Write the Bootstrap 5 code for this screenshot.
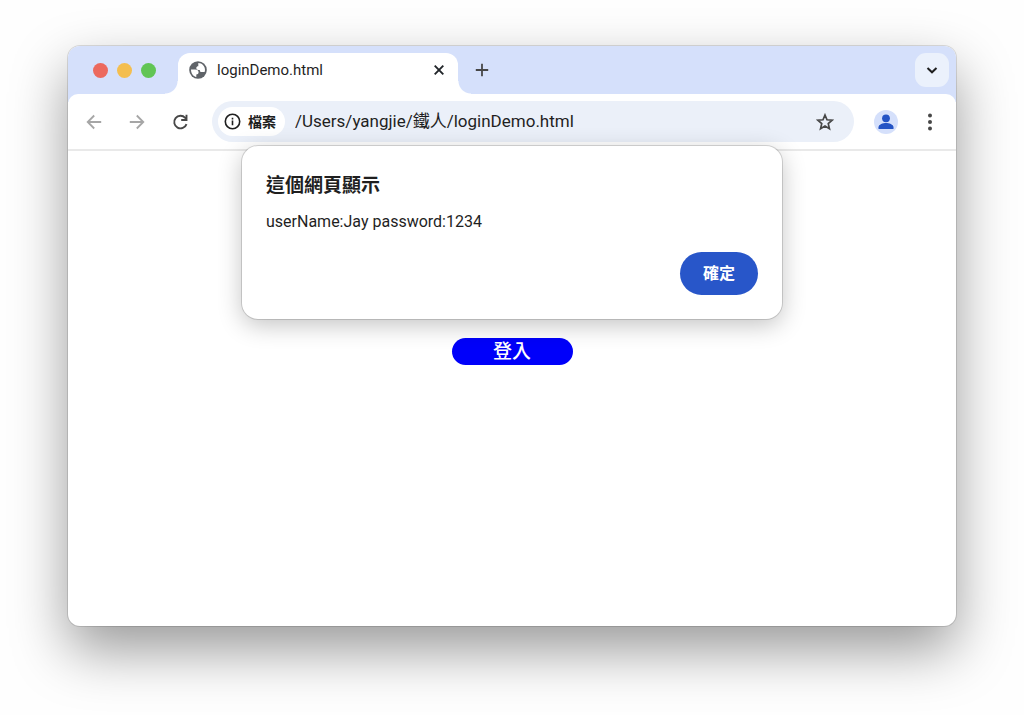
<!DOCTYPE html>
<html lang="zh-Hant">
<head>
<meta charset="utf-8">
<meta name="viewport" content="width=device-width, initial-scale=1">
<title>loginDemo.html</title>
<link href="https://cdn.jsdelivr.net/npm/bootstrap@5.3.0/dist/css/bootstrap.min.css" rel="stylesheet">
<style>
  body { font-family: Roboto, "Noto Sans CJK TC", sans-serif; color: #1f1f1f; background: #fefefe; padding: 46px 68px 89px; }
  svg { display: block; }
  .browser { border-radius: 12px; background: #fff; box-shadow: 0 0 0 1px rgba(0,0,0,.12), 0 24px 56px rgba(0,0,0,.4); }
  .tab-strip { height: 56px; margin-bottom: -8px; padding: 7px 7px 8px 25px; background: #d5e0fb; border-radius: 12px 12px 0 0; }
  .lights { gap: 9px; height: 34px; }
  .light { width: 15px; height: 15px; border-radius: 50%; }
  .light-red { background: #ec695e; }
  .light-yellow { background: #f4be4f; }
  .light-green { background: #61c554; }
  .tab { width: 280px; height: 41px; margin-left: 22px; padding: 0 12px 7px 11px; gap: 10px; background: #fff; border-radius: 12px 12px 0 0; font-size: 15px; line-height: 20px; }
  .tab::before, .tab::after { content: ""; position: absolute; bottom: 0; width: 13px; height: 13px; }
  .tab::before { right: 100%; background: radial-gradient(circle at 0 0, transparent 12px, #fff 13px); }
  .tab::after { left: 100%; background: radial-gradient(circle at 100% 0, transparent 12px, #fff 13px); }
  .icon-btn { padding: 0; border: 0; background: none; color: #474747; flex: none; }
  .new-tab { height: 34px; margin-left: 17px; }
  .tab-search { width: 34px; height: 34px; border-radius: 11px; background: #ebf1fc; color: #1f1f1f; }
  .toolbar { height: 57px; padding: 0 16px 0 17px; background: #fff; border-radius: 10px 10px 0 0; border-bottom: 2px solid #e9e9e9; }
  .nav-icons { gap: 25px; margin-right: 23px; }
  .faded { color: #a6a6a6; }
  .omnibox { height: 41px; border-radius: 21px; background: #ebf0f9; padding: 0 20px 0 6px; }
  .site-chip { height: 29px; padding: 0 9px 0 6px; gap: 7px; border: 0; border-radius: 15px; background: #fff; color: #1f1f1f; font-size: 14px; line-height: 20px; font-weight: 700; }
  .address { border: 0; background: none; padding: 0; margin-left: 10px; font-size: 17px; color: #1f1f1f; outline: 0; }
  .avatar { width: 24px; height: 24px; margin-left: 20px; border-radius: 50%; background: #d5e0fb; color: #2454c5; overflow: hidden; }
  .menu-btn { margin-left: 22px; }
  .alert-box { top: -5px; left: 50%; transform: translateX(-50%); width: 540px; max-width: 100%; padding: 26px 24px 24px; background: #fff; border-radius: 16px; box-shadow: 0 0 0 1px rgba(0,0,0,.14), 0 6px 24px rgba(0,0,0,.24); }
  .alert-title { font-size: 19px; line-height: 28px; font-weight: 700; margin-bottom: 10px; }
  .alert-text { font-size: 16px; line-height: 24px; margin-bottom: 18px; }
  .ok-btn { height: 43px; padding: 0 23px; border: 0; border-radius: 22px; background: #2856c9; color: #fff; font-size: 16px; line-height: 24px; font-weight: 700; }
  .page { padding: 187px 16px 0; }
  .login-btn { width: 121px; height: 27px; padding: 0; border: 0; border-radius: 14px; background: #0000fa; color: #fff; font-size: 19px; line-height: 27px; font-weight: 500; }
</style>
</head>
<body class="min-vh-100 d-flex flex-column">
<main class="browser flex-grow-1 d-flex flex-column">
  <header>
    <div class="tab-strip d-flex align-items-start">
      <div class="lights d-flex align-items-center">
        <span class="light light-red"></span><span class="light light-yellow"></span><span class="light light-green"></span>
      </div>
      <div class="tab position-relative d-flex align-items-center">
        <svg width="18" height="18" viewBox="0 0 18 18"><circle cx="9" cy="9" r="8.8" fill="#5f6368"/><path d="M2 8.400H6C8.500 8.400 9.600 9.500 9.600 11.200S8.500 13.200 7.300 13.400V15.900C4.300 15.200 2 12.500 2 8.400Z M9.300 2.100C13.400 2.200 16 5.400 16 9c0 .8-.2 1.500-.4 2H12.600C11.200 11 10.800 9.900 10.800 8.900H9.400C8.100 8.900 7.300 8 7.300 6.900S8.200 5.200 9.300 5.200Z" fill="#fff"/></svg>
        <span class="flex-grow-1">loginDemo.html</span>
        <button type="button" class="icon-btn text-dark" aria-label="關閉"><svg width="14" height="14" viewBox="0 0 14 14" fill="none" stroke="currentColor" stroke-width="1.900"><path d="M2.700 2.700l8.600 8.600M11.300 2.700l-8.600 8.600"/></svg></button>
      </div>
      <button type="button" class="icon-btn new-tab" aria-label="新分頁"><svg width="14" height="14" viewBox="0 0 14 14" fill="none" stroke="currentColor" stroke-width="1.800"><path d="M7 .8v12.400M.8 7h12.400"/></svg></button>
      <button type="button" class="icon-btn tab-search ms-auto d-flex align-items-center justify-content-center" aria-label="搜尋分頁"><svg width="12" height="12" viewBox="0 0 12 12" fill="none" stroke="currentColor" stroke-width="2"><path d="M1.500 4l4.500 4.300L10.500 4"/></svg></button>
    </div>
    <div class="toolbar position-relative d-flex align-items-center">
      <div class="nav-icons d-flex">
        <button type="button" class="icon-btn faded" aria-label="上一頁"><svg width="18" height="18" viewBox="0 0 18 18" fill="none" stroke="currentColor" stroke-width="1.800"><path d="M16.200 9H3M9.200 2.500L2.700 9l6.500 6.500"/></svg></button>
        <button type="button" class="icon-btn faded" aria-label="下一頁"><svg width="18" height="18" viewBox="0 0 18 18" fill="none" stroke="currentColor" stroke-width="1.800"><path d="M1.800 9H15M8.800 2.500L15.300 9l-6.500 6.500"/></svg></button>
        <button type="button" class="icon-btn" aria-label="重新載入"><svg width="18" height="18" viewBox="0 0 18 18" fill="none" stroke="currentColor" stroke-width="1.900"><path d="M15.500 11.100A6.300 6.300 0 1 1 14.200 4.800L15.500 6.200M15.500 1.800V7H10.200"/></svg></button>
      </div>
      <div class="omnibox flex-grow-1 d-flex align-items-center">
        <button type="button" class="site-chip d-flex align-items-center flex-shrink-0"><svg width="17" height="17" viewBox="0 0 17 17"><circle cx="8.500" cy="8.500" r="7.200" fill="none" stroke="currentColor" stroke-width="1.600"/><path d="M7.700 7.600h1.600v4.700H7.700zM7.700 4.700h1.600v1.700H7.700z" fill="currentColor"/></svg>檔案</button>
        <input class="address flex-grow-1" type="text" aria-label="網址" value="/Users/yangjie/鐵人/loginDemo.html">
        <button type="button" class="icon-btn" aria-label="加入書籤"><svg width="18" height="18" viewBox="0 0 18 18" fill="none" stroke="currentColor" stroke-width="1.700"><path d="M9 2l2 4.800 5.200.45-3.950 3.400 1.200 5.050L9 13l-4.450 2.700 1.200-5.050L1.800 7.250 7 6.800Z"/></svg></button>
      </div>
      <button type="button" class="icon-btn avatar" aria-label="個人資料"><svg width="24" height="24" viewBox="0 0 24 24" fill="currentColor"><circle cx="12" cy="8.300" r="3.900"/><path d="M4.500 19v-1.800c0-2.800 4.700-4.200 7.500-4.200s7.500 1.400 7.500 4.200V19Z"/></svg></button>
      <button type="button" class="icon-btn menu-btn" aria-label="選單"><svg width="20" height="20" viewBox="0 0 20 20" fill="currentColor"><circle cx="10" cy="3.500" r="2"/><circle cx="10" cy="10" r="2"/><circle cx="10" cy="16.500" r="2"/></svg></button>
    </div>
  </header>
  <div class="page position-relative flex-grow-1">
    <form class="text-center"><button type="button" class="login-btn">登入</button></form>
    <section class="alert-box position-absolute" role="dialog" aria-labelledby="alertTitle">
      <h1 class="alert-title" id="alertTitle">這個網頁顯示</h1>
      <p class="alert-text">userName:Jay password:1234</p>
      <div class="d-flex justify-content-end"><button type="button" class="ok-btn">確定</button></div>
    </section>
  </div>
</main>
<script src="https://cdn.jsdelivr.net/npm/bootstrap@5.3.0/dist/js/bootstrap.bundle.min.js"></script>
</body>
</html>
